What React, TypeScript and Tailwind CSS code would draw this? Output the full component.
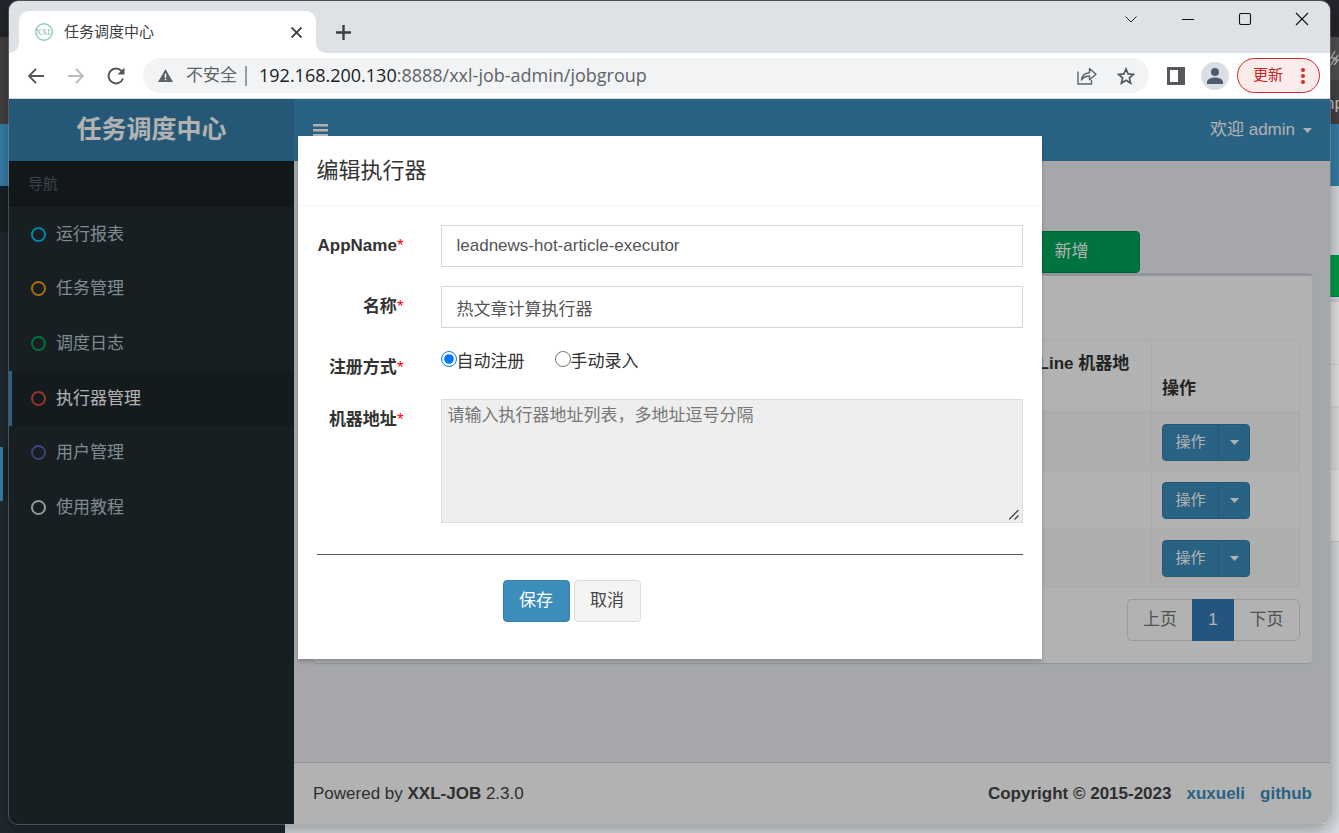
import { useState } from 'react'
import type { ReactNode } from 'react'

const menu = [
  { name: '运行报表', color: 'border-[#00c0ef]' },
  { name: '任务管理', color: 'border-[#f39c12]' },
  { name: '调度日志', color: 'border-[#00a65a]' },
  { name: '执行器管理', color: 'border-[#dd4b39]', active: true },
  { name: '用户管理', color: 'border-[#605ca8]' },
  { name: '使用教程', color: 'border-[#d2d6de]' },
]

function Caret() {
  return (
    <svg width="9" height="5" viewBox="0 0 9 5" fill="currentColor" aria-hidden="true">
      <path d="M0 0h9L4.5 5z" />
    </svg>
  )
}

// The other browser window that sits behind the active one
function BackWindow() {
  return (
    <div className="col-start-1 row-start-1 flex flex-col overflow-hidden bg-[#dde1e7]">
      <div className="h-[37px] bg-[#26272e]" />
      <div className="flex h-[87px] flex-col items-end bg-[#474445]">
        <div className="flex h-[43px] w-9 items-center justify-end bg-[#555354]">
          <svg width="9" height="18" viewBox="0 0 9 18" fill="none" stroke="#bbb" strokeWidth="1.5" aria-hidden="true">
            <path d="M5 1 1 8h4L1 15M4 15l4-5H5l3-5" />
          </svg>
        </div>
        <span className="w-[14px] pt-3 text-[17px] leading-6 text-[#ccc]">np</span>
      </div>
      <div className="h-[62px] bg-[#3983b0]" />
      <div className="flex flex-1">
        <div className="w-[285px] bg-[#202a31]">
          <div className="h-[46px] bg-[#1a2226]" />
          <div className="mt-[215px] h-[54px] border-l-3 border-[#3983b0] bg-[#1c252a]" />
        </div>
        <div className="flex flex-1 flex-col items-end pt-[69px]">
          <div className="h-[42px] w-9 border-b border-[#008d4c] bg-[#00a050]" />
          <div className="mt-[2px] w-9 border-t-3 border-[#d2d6de] bg-[#ededed]">
            <div className="h-[63px] border-b border-[#ddd]" />
            <div className="h-[43px] border-b-2 border-[#ddd]" />
            <div className="h-[62px] border-b border-[#ddd] bg-[#e6e6e6]" />
            <div className="h-[72px] border-b border-[#ccc]" />
          </div>
        </div>
      </div>
    </div>
  )
}

function WindowButton({ label, children }: { label: string; children: ReactNode }) {
  return (
    <button aria-label={label} className="flex h-9 w-[57px] items-center justify-center">
      <svg width="14" height="14" viewBox="0 0 14 14" fill="none" stroke="#111" strokeWidth="1.1">
        {children}
      </svg>
    </button>
  )
}

function TabStrip() {
  return (
    <div className="flex h-[52px] justify-between bg-[#dee1e6]">
      <div className="flex items-end">
        <svg width="10" height="10" viewBox="0 0 10 10" fill="#fff" aria-hidden="true">
          <path d="M10 0v10H0A10 10 0 0 0 10 0z" />
        </svg>
        <div className="flex h-[42px] w-[297px] items-center rounded-t-[10px] bg-white pr-3 pl-4">
          <svg width="18" height="20" viewBox="0 0 18 20" aria-hidden="true">
            <circle cx="9" cy="10" r="8.3" fill="none" stroke="#8fd0b5" strokeWidth="1.4" />
            <text x="9" y="13" textAnchor="middle" fontSize="8" fontFamily="Liberation Serif, serif" fill="#6fbf9f">
              XXL
            </text>
          </svg>
          <span className="ml-[11px] flex-1 text-[15px] text-[#3c4043]">任务调度中心</span>
          <button aria-label="关闭标签页" className="flex size-4 items-center justify-center">
            <svg width="11" height="11" viewBox="0 0 11 11" stroke="#3c4043" strokeWidth="1.9">
              <path d="M0.5 0.5l10 10M10.5 0.5l-10 10" />
            </svg>
          </button>
        </div>
        <svg width="10" height="10" viewBox="0 0 10 10" fill="#fff" aria-hidden="true">
          <path d="M0 0v10h10A10 10 0 0 1 0 0z" />
        </svg>
        <button aria-label="新标签页" className="flex h-[42px] w-[35px] items-center justify-center">
          <svg width="15" height="15" viewBox="0 0 15 15" stroke="#3c4043" strokeWidth="2.4">
            <path d="M7.5 0v15M0 7.5h15" />
          </svg>
        </button>
      </div>
      <div className="flex">
        <WindowButton label="搜索标签页">
          <path d="M1.500 4.500l5.500 5.500 5.500-5.500" strokeWidth="0.9" />
        </WindowButton>
        <WindowButton label="最小化">
          <path d="M1 7.5h12" />
        </WindowButton>
        <WindowButton label="最大化">
          <rect x="1.5" y="1.5" width="11" height="11" rx="1.5" />
        </WindowButton>
        <WindowButton label="关闭">
          <path d="M1 1l12 12M13 1L1 13" />
        </WindowButton>
      </div>
    </div>
  )
}

function Toolbar() {
  const navButton = 'flex h-9 w-10 items-center justify-center'
  return (
    <div className="flex h-[46px] items-center border-b border-[#d5d7da] bg-white pr-[10px] pl-[7px]">
      <button aria-label="后退" className={navButton}>
        <svg width="18" height="18" viewBox="0 0 18 18" fill="none" stroke="#54585d" strokeWidth="1.8">
          <path d="M17 9H2M9 2L2 9l7 7" />
        </svg>
      </button>
      <button aria-label="前进" className={navButton}>
        <svg width="18" height="18" viewBox="0 0 18 18" fill="none" stroke="#babcbe" strokeWidth="1.8">
          <path d="M1 9h15M9 2l7 7-7 7" />
        </svg>
      </button>
      <button aria-label="刷新" className={navButton}>
        <svg width="18" height="18" viewBox="0 0 18 18" aria-hidden="true">
          <path d="M14.5 4A7.4 7.4 0 1 0 16 11.5" fill="none" stroke="#54585d" strokeWidth="2" />
          <path d="M17.5 0.5v7h-7z" fill="#54585d" />
        </svg>
      </button>
      <div className="mr-[18px] ml-[7px] flex h-[35px] min-w-0 flex-1 items-center rounded-full bg-[#f1f3f4] pr-[14px] pl-[15px]">
        <svg width="15" height="13" viewBox="0 0 15 13" aria-hidden="true">
          <path d="M7.5 0L15 13H0z" fill="#5f6368" />
          <path d="M6.7 4.7h1.6v4H6.7zM6.7 9.8h1.6v1.5H6.7z" fill="#f1f3f4" />
        </svg>
        <span className="ml-[13px] text-[17px] text-[#5f6368]">不安全</span>
        <span className="mx-2 h-5 w-[2px] bg-[#9a9ea3]" />
        <div className="ml-1 flex-1 font-['Open_Sans',sans-serif] text-[18px] text-[#5f6368]">
          <span className="text-[#202124]">192.168.200.130</span>:8888/xxl-job-admin/jobgroup
        </div>
        <button aria-label="分享">
          <svg width="20" height="18" viewBox="0 0 20 18" fill="none" stroke="#5f6368" strokeWidth="1.4">
            <path d="M1 4.5V17h13.5v-4" />
            <path d="M4.5 13C5 8.500 8 6 12.500 5.700V1.500L19 7.200l-6.500 5.500V9C9 9 6.500 10 4.500 13z" strokeLinejoin="round" />
          </svg>
        </button>
        <button aria-label="收藏" className="ml-5">
          <svg width="18" height="18" viewBox="0 0 18 18" fill="none" stroke="#54585d" strokeWidth="1.7">
            <path d="M9 2l2.100 4.900 5.300.5-4 3.500 1.200 5.200L9 13.300l-4.600 2.800 1.200-5.200-4-3.500 5.300-.5z" />
          </svg>
        </button>
      </div>
      <button aria-label="侧边栏">
        <svg width="18" height="18" viewBox="0 0 18 18" aria-hidden="true">
          <path d="M0 0h18v18H0zM3 3v12h8V3z" fill="#54585d" fillRule="evenodd" />
        </svg>
      </button>
      <button aria-label="个人资料" className="mr-2 ml-4 flex size-7 items-center justify-center rounded-full bg-[#dadee5]">
        <svg width="16" height="16" viewBox="0 0 16 16" fill="#505b70" aria-hidden="true">
          <circle cx="8" cy="4" r="4" />
          <path d="M0 16v-2c0-3 4.500-4.500 8-4.500s8 1.500 8 4.500v2z" />
        </svg>
      </button>
      <button className="flex h-[35px] w-[83px] items-center justify-between rounded-full border border-[#cf2a26] bg-[#fbeceb] pr-[13px] pl-[15px] text-[15px] text-[#c5221f]">
        更新
        <svg width="6" height="16" viewBox="0 0 6 16" fill="#d62d28" aria-hidden="true">
          <circle cx="3" cy="2" r="2" />
          <circle cx="3" cy="8" r="2" />
          <circle cx="3" cy="14" r="2" />
        </svg>
      </button>
    </div>
  )
}

function Sidebar() {
  return (
    <aside className="w-[285px] shrink-0 bg-[#222d32]">
      <div className="flex h-[46px] items-center bg-[#1a2226] px-[19px] text-[15px] text-[#4b646f]">导航</div>
      <nav className="grid h-[328px] grid-rows-6">
        {menu.map(item => (
          <a
            key={item.name}
            href="#"
            className={
              item.active
                ? 'flex items-center gap-[10px] border-l-3 border-[#3c8dbc] bg-[#1e282c] pl-[19px] text-white'
                : 'flex items-center gap-[10px] border-l-3 border-transparent pl-[19px] text-[#b8c7ce]'
            }
          >
            <span className={`size-[15px] rounded-full border-2 ${item.color}`} />
            {item.name}
          </a>
        ))}
      </nav>
    </aside>
  )
}

function GroupTable() {
  return (
    <div className="rounded-[4px] border-t-3 border-[#d2d6de] bg-white px-3 pt-16 pb-[22px] shadow-[0_1px_1px_rgba(0,0,0,0.1)]">
      <table className="w-full table-fixed border-collapse border border-[#f4f4f4]">
        <colgroup>
          <col />
          <col className="w-[147px]" />
          <col className="w-[148px]" />
        </colgroup>
        <thead>
          <tr className="h-[72px] border-b-3 border-[#f4f4f4] text-left align-bottom leading-[25px] text-[#333]">
            <th className="border-r border-[#f4f4f4]" />
            <th className="border-r border-[#f4f4f4] p-[10px]">OnLine 机器地址</th>
            <th className="p-[10px]">操作</th>
          </tr>
        </thead>
        <tbody>
          {[1, 2, 3].map(id => (
            <tr key={id} className="border-b border-[#f4f4f4] odd:bg-[#f9f9f9]">
              <td className="border-r border-[#f4f4f4]" />
              <td className="border-r border-[#f4f4f4]" />
              <td className="px-[10px] py-[10px]">
                <div className="flex text-[15px] text-white">
                  <button className="h-[37px] w-[57px] rounded-l-[4px] border border-[#367fa9] bg-[#3c8dbc]">
                    操作
                  </button>
                  <button
                    aria-label="更多操作"
                    className="-ml-px flex h-[37px] w-8 items-center justify-center rounded-r-[4px] border border-[#367fa9] bg-[#3c8dbc]"
                  >
                    <Caret />
                  </button>
                </div>
              </td>
            </tr>
          ))}
        </tbody>
      </table>
      <div className="mt-[11px] flex justify-end text-[#777]">
        <button className="h-[42px] w-[65px] rounded-l-[5px] border border-r-0 border-[#ddd]">上页</button>
        <button className="h-[42px] w-[42px] bg-[#337ab7] text-white">1</button>
        <button className="h-[42px] w-[66px] rounded-r-[5px] border border-l-0 border-[#ddd]">下页</button>
      </div>
    </div>
  )
}

function FormRow({ label, htmlFor, children }: { label: string; htmlFor: string; children: ReactNode }) {
  return (
    <div className="flex items-start gap-[37px]">
      <label htmlFor={htmlFor} className="w-[87px] pt-2 text-right leading-[25px] font-bold whitespace-nowrap">
        {label}
        <span className="font-normal text-[#f00]">*</span>
      </label>
      <div className="min-w-0 flex-1">{children}</div>
    </div>
  )
}

function EditModal() {
  const [appName, setAppName] = useState('leadnews-hot-article-executor')
  const [title, setTitle] = useState('热文章计算执行器')
  const [type, setType] = useState('auto')
  const inputClass = 'block h-[42px] w-full border border-[#d2d6de] bg-white px-[15px] text-[#555] outline-none'

  return (
    <div className="absolute inset-0 flex items-start justify-center bg-black/30 pt-[37px]">
      <div role="dialog" aria-label="编辑执行器" className="w-[744px] bg-white text-[#333] shadow-[0_3px_4px_rgba(0,0,0,0.2)]">
        <h4 className="flex h-[70px] items-center border-b border-[#f4f4f4] px-[19px] text-[22px]">编辑执行器</h4>
        <form className="px-[19px] pt-[19px] pb-[37px]" onSubmit={e => e.preventDefault()}>
          <div className="flex flex-col gap-[19px]">
            <FormRow label="AppName" htmlFor="appname">
              <input id="appname" className={inputClass} value={appName} onChange={e => setAppName(e.target.value)} />
            </FormRow>
            <FormRow label="名称" htmlFor="title">
              <input id="title" className={inputClass} value={title} onChange={e => setTitle(e.target.value)} />
            </FormRow>
            <FormRow label="注册方式" htmlFor="type-auto">
              <div className="flex gap-[30px] pt-[2px] leading-[25px]">
                <label className="flex items-start">
                  <input
                    id="type-auto"
                    type="radio"
                    name="type"
                    className="mt-[2px] size-4"
                    checked={type === 'auto'}
                    onChange={() => setType('auto')}
                  />
                  自动注册
                </label>
                <label className="flex items-start">
                  <input
                    type="radio"
                    name="type"
                    className="mt-[2px] size-4"
                    checked={type === 'manual'}
                    onChange={() => setType('manual')}
                  />
                  手动录入
                </label>
              </div>
            </FormRow>
            <FormRow label="机器地址" htmlFor="address">
              <div className="relative">
                <textarea
                  id="address"
                  readOnly
                  placeholder="请输入执行器地址列表，多地址逗号分隔"
                  className="block h-[124px] w-full resize-none border border-[#ddd] bg-[#eee] px-[6px] py-[3px] leading-[25px] outline-none placeholder:text-[#777]"
                />
                <svg
                  className="absolute right-1 bottom-[3px]"
                  width="10"
                  height="10"
                  viewBox="0 0 10 10"
                  stroke="#4a4a4a"
                  strokeWidth="1.4"
                  aria-hidden="true"
                >
                  <path d="M0 9.500L9.500 0M5.500 9.500L9.500 5.500" />
                </svg>
              </div>
            </FormRow>
          </div>
          <hr className="mt-[31px] mb-[25px] border-[#555]" />
          <div className="flex gap-1 pl-[186px]">
            <button className="h-[42px] w-[67px] rounded-[4px] border border-[#367fa9] bg-[#3c8dbc] text-white">
              保存
            </button>
            <button type="button" className="h-[42px] w-[67px] rounded-[4px] border border-[#ddd] bg-[#f4f4f4] text-[#444]">
              取消
            </button>
          </div>
        </form>
      </div>
    </div>
  )
}

export default function App() {
  return (
    <div className="grid min-h-screen grid-cols-1 overflow-hidden font-['Liberation_Sans','Noto_Sans_CJK_SC',sans-serif] text-[17px]">
      <BackWindow />
      <div className="z-10 col-start-1 row-start-1 mx-2 mb-2 flex flex-col overflow-hidden rounded-[10px] border border-[#77777780] bg-clip-padding shadow-[0_4px_22px_rgba(0,0,0,0.4)]">
        <TabStrip />
        <Toolbar />
        <div className="relative flex flex-1 flex-col">
          <header className="flex h-[62px] text-white">
            <h1 className="flex w-[285px] items-center justify-center bg-[#367fa9] text-[25px] font-bold">任务调度中心</h1>
            <div className="flex flex-1 items-center justify-between bg-[#3c8dbc] pr-[18px] pl-[19px]">
              <button aria-label="切换导航">
                <svg width="15" height="14" viewBox="0 0 15 14" fill="currentColor" aria-hidden="true">
                  <path d="M0 1h15v2.500H0zM0 6h15v2.500H0zM0 11h15v2.500H0z" />
                </svg>
              </button>
              <a href="#" className="flex items-center gap-2">
                欢迎 admin
                <Caret />
              </a>
            </div>
          </header>
          <div className="flex flex-1">
            <Sidebar />
            <div className="flex min-w-0 flex-1 flex-col bg-[#ecf0f5]">
              <main className="flex-1 pt-[70px] pr-[18px] pl-[19px]">
                <div className="flex justify-end pr-[172px]">
                  <button className="h-[42px] w-[137px] rounded-[4px] border border-[#008d4c] bg-[#00a65a] text-white">
                    新增
                  </button>
                </div>
                <GroupTable />
              </main>
              <footer className="flex h-[62px] items-center justify-between border-t border-[#d2d6de] bg-white pr-[18px] pl-[19px] text-[#444]">
                <span>
                  Powered by <b>XXL-JOB</b> 2.3.0
                </span>
                <div className="flex gap-[15px] font-bold">
                  <span>Copyright © 2015-2023</span>
                  <a href="#" className="text-[#3c8dbc]">
                    xuxueli
                  </a>
                  <a href="#" className="text-[#3c8dbc]">
                    github
                  </a>
                </div>
              </footer>
            </div>
          </div>
          <EditModal />
        </div>
      </div>
    </div>
  )
}
